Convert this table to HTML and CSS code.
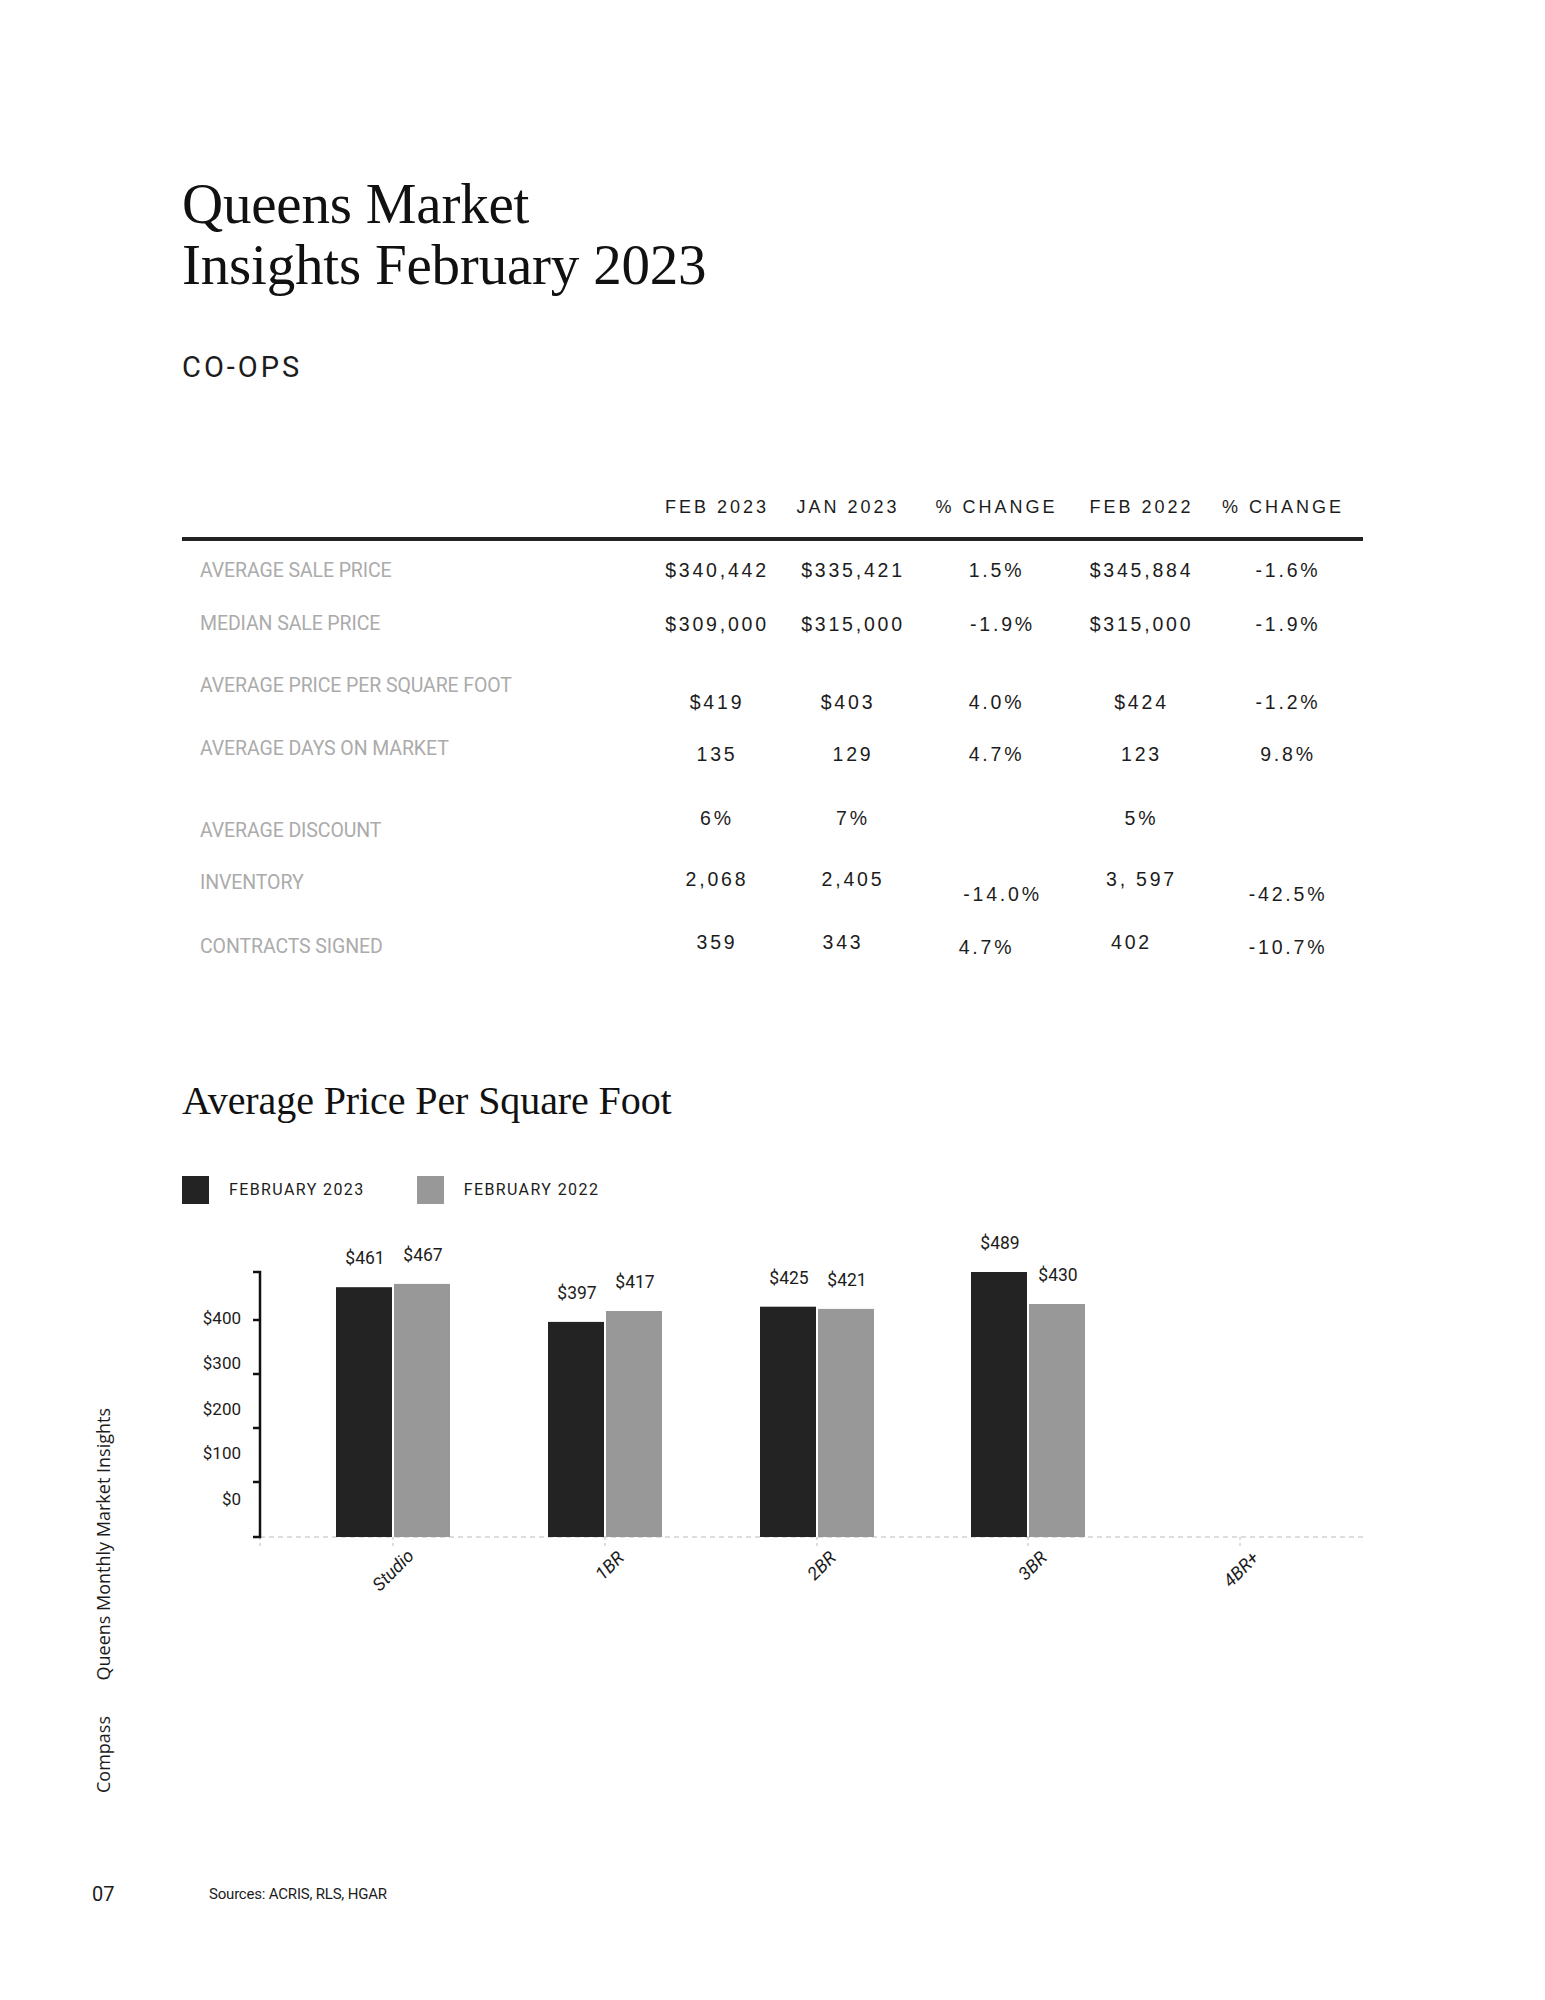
FILE: index.html
```html
<!DOCTYPE html>
<html lang="en">
<head>
<meta charset="utf-8">
<title>Queens Market Insights February 2023</title>
<link rel="stylesheet" href="styles.css">
</head>
<body>
<div class="page">
  <aside class="side">
    <span class="side-text">Queens Monthly Market Insights</span>
    <span class="side-text">Compass</span>
  </aside>
  <main class="main">
    <h1 class="title">Queens Market<br>Insights February 2023</h1>
    <h2 class="kicker">CO-OPS</h2>

    <div class="stats">
      <div class="srow shead">
        <span class="hcell"></span>
        <span class="hcell">FEB 2023</span>
        <span class="hcell nudge-l">JAN 2023</span>
        <span class="hcell">% CHANGE</span>
        <span class="hcell">FEB 2022</span>
        <span class="hcell nudge-l">% CHANGE</span>
      </div>
      <div class="srow r1">
        <span class="lab">AVERAGE SALE PRICE</span>
        <span class="val">$340,442</span>
        <span class="val">$335,421</span>
        <span class="val pct">1.5%</span>
        <span class="val">$345,884</span>
        <span class="val pct">-1.6%</span>
      </div>
      <div class="srow r2">
        <span class="lab">MEDIAN SALE PRICE</span>
        <span class="val">$309,000</span>
        <span class="val">$315,000</span>
        <span class="val pct nudge-r">-1.9%</span>
        <span class="val">$315,000</span>
        <span class="val pct">-1.9%</span>
      </div>
      <div class="srow r3">
        <span class="lab">AVERAGE PRICE PER SQUARE FOOT</span>
        <span class="val">$419</span>
        <span class="val nudge-l">$403</span>
        <span class="val pct">4.0%</span>
        <span class="val">$424</span>
        <span class="val pct">-1.2%</span>
      </div>
      <div class="srow r4">
        <span class="lab">AVERAGE DAYS ON MARKET</span>
        <span class="val">135</span>
        <span class="val">129</span>
        <span class="val pct">4.7%</span>
        <span class="val">123</span>
        <span class="val pct">9.8%</span>
      </div>
      <div class="srow r5">
        <span class="lab">AVERAGE DISCOUNT</span>
        <span class="val">6%</span>
        <span class="val">7%</span>
        <span class="val pct"></span>
        <span class="val">5%</span>
        <span class="val pct"></span>
      </div>
      <div class="srow r6">
        <span class="lab">INVENTORY</span>
        <span class="val">2,068</span>
        <span class="val">2,405</span>
        <span class="val pct nudge-r">-14.0%</span>
        <span class="val">3, 597</span>
        <span class="val pct">-42.5%</span>
      </div>
      <div class="srow r7">
        <span class="lab">CONTRACTS SIGNED</span>
        <span class="val">359</span>
        <span class="val nudge-ll">343</span>
        <span class="val pct nudge-ll">4.7%</span>
        <span class="val nudge-ll">402</span>
        <span class="val pct">-10.7%</span>
      </div>
    </div>

    <h2 class="chart-title">Average Price Per Square Foot</h2>
    <div class="legend">
      <div class="legend-item"><span class="swatch swatch-dark"></span><span class="legend-label">FEBRUARY 2023</span></div>
      <div class="legend-item"><span class="swatch swatch-gray"></span><span class="legend-label">FEBRUARY 2022</span></div>
    </div>

    <svg class="chart" width="1188" height="416" viewBox="0 0 1188 416">
      <line class="grid-base" x1="78" y1="333" x2="1181" y2="333"/>
      <g class="grid-tick">
        <line x1="78" y1="333" x2="78" y2="343"/>
        <line x1="211" y1="333" x2="211" y2="343"/>
        <line x1="423" y1="333" x2="423" y2="343"/>
        <line x1="635" y1="333" x2="635" y2="343"/>
        <line x1="846" y1="333" x2="846" y2="343"/>
        <line x1="1058" y1="333" x2="1058" y2="343"/>
      </g>

      <g class="bars-dark">
        <rect x="154" y="83.2" width="56" height="249.8"/>
        <rect x="366" y="117.9" width="56" height="215.1"/>
        <rect x="578" y="102.7" width="56" height="230.3"/>
        <rect x="789" y="68" width="56" height="265"/>
      </g>
      <g class="bars-gray">
        <rect x="212" y="79.9" width="56" height="253.1"/>
        <rect x="424" y="107" width="56" height="226"/>
        <rect x="636" y="104.9" width="56" height="228.1"/>
        <rect x="847" y="100" width="56" height="233"/>
      </g>

      <path class="axis" d="M71 68H78V333H71M71 116H78M71 170H78M71 224H78M71 278H78"/>

      <g class="ylab">
        <text x="59" y="120">$400</text>
        <text x="59" y="165">$300</text>
        <text x="59" y="211">$200</text>
        <text x="59" y="255">$100</text>
        <text x="59" y="301">$0</text>
      </g>

      <g class="vlab">
        <text x="183" y="60">$461</text>
        <text x="241" y="57">$467</text>
        <text x="395" y="95">$397</text>
        <text x="453" y="84">$417</text>
        <text x="607" y="80">$425</text>
        <text x="665" y="82">$421</text>
        <text x="818" y="45">$489</text>
        <text x="876" y="77">$430</text>
      </g>

      <g class="xlab">
        <text transform="translate(233 353) rotate(-45)">Studio</text>
        <text transform="translate(443 355) rotate(-45)">1BR</text>
        <text transform="translate(655 355) rotate(-45)">2BR</text>
        <text transform="translate(866 355) rotate(-45)">3BR</text>
        <text transform="translate(1078 355) rotate(-45)">4BR+</text>
      </g>
    </svg>
  </main>
</div>
<footer class="foot">
  <span class="pg">07</span>
  <span class="src">Sources: ACRIS, RLS, HGAR</span>
</footer>
</body>
</html>
```

FILE: styles.css
```css
* { box-sizing: border-box; }

html, body {
  margin: 0;
  padding: 0;
  background: #ffffff;
  color: #1c1c1c;
}

body {
  width: 1545px;
  font-family: "Liberation Sans", Arial, sans-serif;
}

.page {
  display: grid;
  grid-template-columns: 182px 1188px;
  min-height: 1860px;
}

/* ---------- sidebar ---------- */
.side {
  display: flex;
  flex-direction: column;
  justify-content: flex-end;
  align-items: flex-start;
  gap: 35px;
  padding: 0 0 67px 91px;
}

.side-text {
  writing-mode: vertical-rl;
  transform: rotate(180deg);
  font-family: "Open Sans", "Noto Sans", sans-serif;
  font-size: 18px;
  line-height: 24px;
  color: #1c1c1c;
  white-space: nowrap;
}

/* ---------- main ---------- */
.main {
  padding-top: 173px;
}

.title {
  margin: 0;
  font-family: "Liberation Serif", "Times New Roman", serif;
  font-weight: 400;
  font-size: 57px;
  line-height: 61px;
  letter-spacing: -0.2px;
  color: #111;
}

.kicker {
  margin: 54px 0 0;
  font-family: Roboto, "Liberation Sans", sans-serif;
  font-weight: 400;
  font-size: 29px;
  line-height: 36px;
  letter-spacing: 3px;
  color: #1c1c1c;
}

/* ---------- stats table ---------- */
.stats {
  margin-top: 110px;
  width: 1181px;
}

.srow {
  display: grid;
  grid-template-columns: 469px 132px 140px 147px 143px 150px;
  height: var(--h, 60px);
  align-items: start;
}

.shead {
  height: auto;
  align-items: end;
}

.hcell {
  font-family: "Liberation Sans", Arial, sans-serif;
  font-size: 18px;
  line-height: 24px;
  letter-spacing: 3px;
  text-align: center;
  padding-bottom: 18px;
  border-bottom: 4px solid #222;
  white-space: nowrap;
  color: #1c1c1c;
}

.lab {
  padding-top: var(--lab, 17px);
  padding-left: 18px;
  font-family: Roboto, "Liberation Sans", sans-serif;
  font-size: 19.5px;
  line-height: 24px;
  color: #ababab;
  white-space: nowrap;
  letter-spacing: -0.1px;
}

.val {
  padding-top: var(--val, 17px);
  font-family: "Liberation Sans", Arial, sans-serif;
  font-size: 19.5px;
  line-height: 24px;
  letter-spacing: 2.8px;
  text-align: center;
  white-space: nowrap;
  color: #1c1c1c;
}

.val.pct {
  padding-top: var(--pct, var(--val, 17px));
}

.nudge-l { padding-right: 10px; }
.nudge-ll { padding-right: 20px; }
.nudge-r { padding-left: 12px; }

.r1 { --h: 59px; --lab: 18px; --val: 17px; }
.r2 { --h: 60px; --lab: 12px; --val: 12px; }
.r3 { --h: 65px; --lab: 14px; --val: 30px; }
.r4 { --h: 65px; --lab: 12px; --val: 17px; }
.r5 { --h: 65px; --lab: 29px; --val: 16px; }
.r6 { --h: 60px; --lab: 16px; --val: 12px; --pct: 27px; }
.r7 { --h: 60px; --lab: 20px; --val: 15px; --pct: 20px; }

/* ---------- chart ---------- */
.chart-title {
  margin: 102px 0 0;
  font-family: "Liberation Serif", "Times New Roman", serif;
  font-weight: 400;
  font-size: 40px;
  line-height: 48px;
  letter-spacing: -0.1px;
  color: #111;
}

.legend {
  margin-top: 51px;
  display: flex;
  gap: 52px;
  height: 28px;
}

.legend-item {
  display: flex;
  align-items: center;
  gap: 20px;
}

.swatch {
  width: 27px;
  height: 28px;
  display: block;
}

.swatch-dark { background: #232323; }
.swatch-gray { background: #989898; }

.legend-label {
  font-family: Roboto, "Liberation Sans", sans-serif;
  font-size: 16px;
  line-height: 20px;
  letter-spacing: 1.4px;
  color: #1c1c1c;
  white-space: nowrap;
}

.chart {
  display: block;
}

.grid-base {
  stroke: #d2d2d2;
  stroke-width: 1.5;
  stroke-dasharray: 5 4;
}

.grid-tick line {
  stroke: #d2d2d2;
  stroke-width: 1.5;
  stroke-dasharray: 3 3;
}

.bars-dark rect { fill: #232323; }
.bars-gray rect { fill: #989898; }

.axis {
  fill: none;
  stroke: #111;
  stroke-width: 2.5;
}

.ylab text {
  font-family: Roboto, "Liberation Sans", sans-serif;
  font-size: 17px;
  fill: #1c1c1c;
  text-anchor: end;
}

.vlab text {
  font-family: Roboto, "Liberation Sans", sans-serif;
  font-size: 17.5px;
  fill: #1c1c1c;
  text-anchor: middle;
}

.xlab text {
  font-family: Roboto, "Liberation Sans", sans-serif;
  font-style: italic;
  font-size: 18px;
  fill: #1c1c1c;
  text-anchor: end;
}

/* ---------- footer ---------- */
.foot {
  display: flex;
  align-items: center;
  padding: 22px 0 0 92px;
}

.pg {
  width: 117px;
  font-family: Roboto, "Liberation Sans", sans-serif;
  font-size: 20px;
  line-height: 24px;
  color: #1c1c1c;
}

.src {
  font-family: Roboto, "Liberation Sans", sans-serif;
  font-size: 15px;
  line-height: 24px;
  letter-spacing: -0.2px;
  color: #1c1c1c;
}
```
